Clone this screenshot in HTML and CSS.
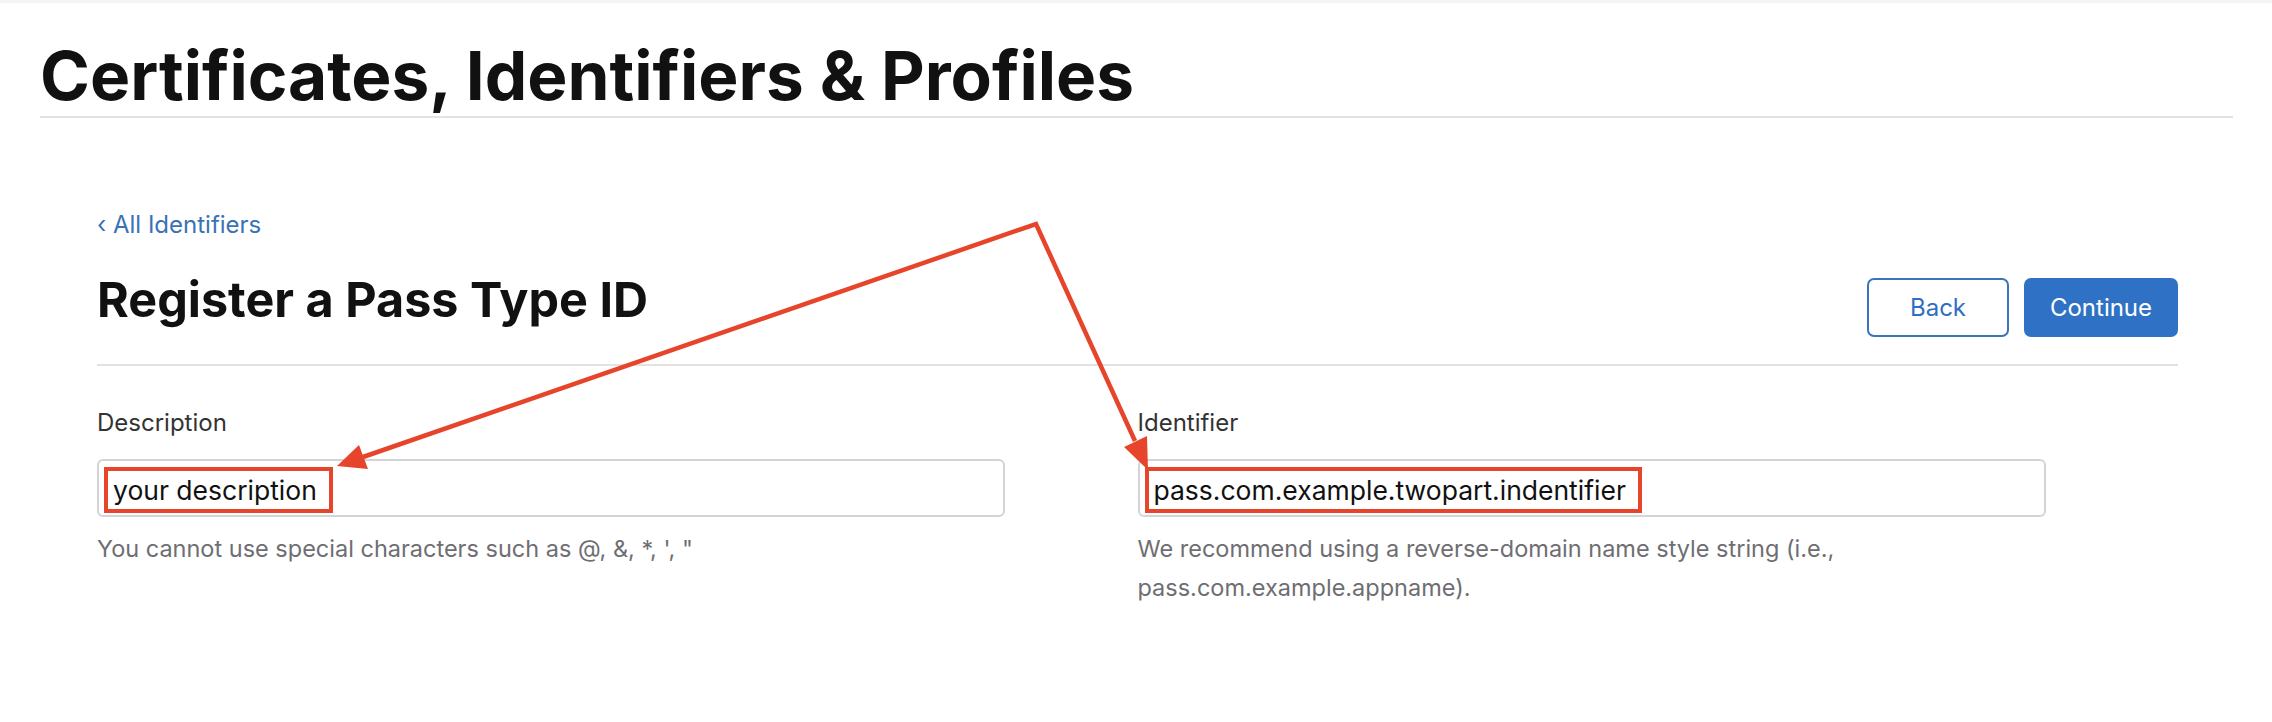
FILE: index.html
```html
<!DOCTYPE html>
<html lang="en">
<head>
    <meta charset="UTF-8">
    <meta name="viewport" content="width=device-width, initial-scale=1.0">
    <title>Register a Pass Type ID</title>
    <link rel="stylesheet" href="styles.css">
</head>
<body>

    <header class="page-header">
        <h1>Certificates, Identifiers &amp; Profiles</h1>
    </header>

    <main class="content">
        <a class="back-link" href="#">&lsaquo; All Identifiers</a>

        <div class="title-row">
            <h2>Register a Pass Type ID</h2>
            <div class="actions">
                <button class="btn btn-outline" type="button">Back</button>
                <button class="btn btn-primary" type="button">Continue</button>
            </div>
        </div>

        <form class="fields">
            <div class="field">
                <label>Description</label>
                <div class="input"><span class="mark">your description</span></div>
                <p class="hint">You cannot use special characters such as @, &amp;, *, ', "</p>
            </div>
            <div class="field">
                <label>Identifier</label>
                <div class="input"><span class="mark">pass.com.example.twopart.indentifier</span></div>
                <p class="hint">We recommend using a reverse-domain name style string (i.e., pass.com.example.appname).</p>
            </div>
        </form>
    </main>

    <!-- annotation arrows -->
    <svg class="arrows" width="2272" height="722" viewBox="0 0 2272 722">
        <polyline points="363,457 1036,224 1135,441" fill="none" stroke="#e6452b" stroke-width="4.5" stroke-linejoin="miter"/>
        <polygon points="337,466 359,445 368,469" fill="#e6452b"/>
        <polygon points="1148,470 1124,447 1147,436" fill="#e6452b"/>
    </svg>

</body>
</html>
```

FILE: styles.css
```css
body {
    margin: 0;
    border-top: 3px solid #f5f5f6;
    font-family: Inter, "Liberation Sans", sans-serif;
    color: #111;
    background: #fff;
    position: relative;
}
.page-header {
    margin: 0 39px 0 40px;
    padding-top: 39px;
    padding-bottom: 7px;
    border-bottom: 2px solid #e2e2e2;
}
.page-header h1 {
    margin: 0;
    font-size: 67.5px;
    line-height: 67px;
    font-weight: 700;
}
.content {
    margin-left: 97px;
    width: 2081px;
}
.back-link {
    display: block;
    margin-top: 95px;
    font-size: 24px;
    line-height: 23px;
    color: #3a72b6;
    text-decoration: none;
}
.title-row {
    display: flex;
    justify-content: space-between;
    align-items: flex-start;
    margin-top: 40px;
    padding-bottom: 27px;
    border-bottom: 2px solid #e2e2e2;
}
.title-row h2 {
    margin: 0;
    font-size: 48.5px;
    line-height: 48px;
    font-weight: 700;
}
.actions {
    display: flex;
    gap: 15px;
    margin-top: 2px;
}
.btn {
    height: 59px;
    font-family: inherit;
    font-size: 24px;
    border-radius: 7px;
    cursor: pointer;
}
.btn-outline {
    width: 142px;
    background: #fff;
    color: #2f6fbf;
    border: 2px solid #3a74bb;
}
.btn-primary {
    width: 154px;
    background: #2f72c5;
    color: #fff;
    border: none;
}
.fields {
    display: grid;
    grid-template-columns: 1fr 1fr;
    margin-top: 45px;
}
.field label {
    display: block;
    font-size: 24px;
    line-height: 24px;
    color: #333;
}
.input {
    box-sizing: border-box;
    width: 908px;
    height: 58px;
    margin-top: 24px;
    padding: 6px 5px;
    border: 2px solid #d4d4d6;
    border-radius: 6px;
    display: flex;
    align-items: flex-start;
}
.mark {
    height: 38px;
    padding: 0 12px 0 5px;
    border: 4px solid #e6452b;
    font-size: 26.5px;
    line-height: 38px;
    color: #111;
}
.hint {
    max-width: 908px;
    margin: 12px 0 0;
    font-size: 23.5px;
    line-height: 39px;
    color: #6e6e72;
}
.arrows {
    position: absolute;
    top: -3px;
    left: 0;
    pointer-events: none;
}
```
